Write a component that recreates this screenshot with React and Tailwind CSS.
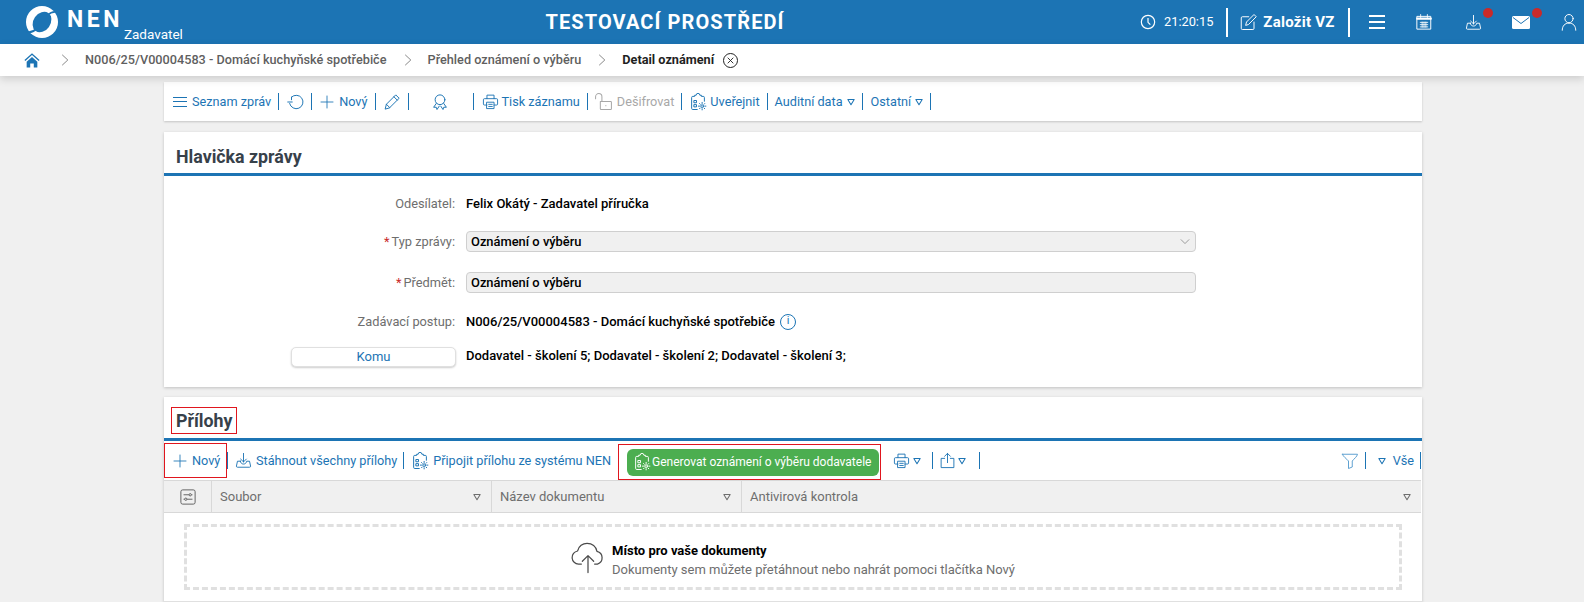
import React from 'react';

const blue = 'text-[#1c74b4]';

const Sep = ({ className = '' }) => <span className={`block w-px h-[17px] bg-[#1c74b4] shrink-0 ${className}`} />;

const Tri = ({ className = 'text-[#1c74b4]' }) => (
  <svg viewBox="0 0 10 10" className={`w-[8px] h-[8px] shrink-0 ${className}`} fill="none" stroke="currentColor" strokeWidth="1.300">
    <path d="M1 2h8L5 8.500z" strokeLinejoin="round" />
  </svg>
);

const Ico = ({ children, className = '' }) => (
  <svg viewBox="0 0 24 24" fill="none" stroke="currentColor" strokeWidth="1.300" strokeLinecap="round" strokeLinejoin="round" className={`shrink-0 ${className}`}>
    {children}
  </svg>
);

const PrintIcon = ({ className }) => (
  <Ico className={className}>
    <path d="M7 8V3h10v5M7 17H3.500a1.500 1.500 0 0 1-1.500-1.500v-6A1.500 1.500 0 0 1 3.500 8h17a1.500 1.500 0 0 1 1.500 1.500v6a1.500 1.500 0 0 1-1.500 1.500H17" />
    <path d="M7 13h10v9H7zM9.500 16h5M9.500 19h5" />
  </Ico>
);

const ClipGear = ({ className }) => (
  <Ico className={className}>
    <path d="M11 22H5a1.500 1.500 0 0 1-1.500-1.500V6A1.500 1.500 0 0 1 5 4.500h2.500V3h2a2.500 2.500 0 0 1 5 0h2v1.500H19A1.500 1.500 0 0 1 20.500 6v5" />
    <path d="M7 10h3v3H7zM7 15.500h3v3H7z" />
    <circle cx="17.500" cy="17.500" r="1.800" />
    <path d="M17.500 12.500v1.500M17.500 21v1.500M12.500 17.500H14M21 17.500h1.500M14 14l1 1M20 20l1 1M14 21l1-1M20 15l1-1" />
  </Ico>
);

const DownloadTray = ({ className }) => (
  <Ico className={className}>
    <path d="M12 2v12M8 10l4 4 4-4" />
    <path d="M7.500 13H3.500L2 20a1.500 1.500 0 0 0 1.500 1.500h17A1.500 1.500 0 0 0 22 20l-1.500-7h-4c-.5 2.500-2 4-4.500 4s-4-1.500-4.500-4z" />
  </Ico>
);

const Dot = ({ className }) => <span className={`absolute w-[10px] h-[10px] rounded-full bg-[#c92a2a] ${className}`} />;

const Logo = () => (
  <svg viewBox="0 0 32 32" className="w-[32px] h-[32px] shrink-0">
    <circle cx="16" cy="16" r="16" fill="#fff" />
    <ellipse cx="16" cy="16" rx="8.500" ry="11" transform="rotate(35 16 16)" fill="#1c74b4" />
    <path d="M21 9.500C25 6 28.500 5 32 6.500M11 22.500C7 26 3.500 27 0 25.500" fill="none" stroke="#1c74b4" strokeWidth="1.800" />
  </svg>
);

const Header = () => (
  <header className="h-[44px] bg-[#1c74b4] text-white flex items-center shrink-0">
    <div className="flex items-center pl-[26px] w-[190px] h-full shrink-0 whitespace-nowrap">
      <Logo />
      <span className="ml-[9px] font-bold text-[23px] leading-none tracking-[3.500px] -mt-[1px] mb-[4px]">NEN</span>
      <span className="text-[13.500px] self-end ml-[1px] leading-[20px]">Zadavatel</span>
    </div>
    <div className="flex-1 text-center font-bold text-[20px] tracking-[1.100px]">TESTOVACÍ PROSTŘEDÍ</div>
    <div className="flex items-center h-full w-[444px] shrink-0">
      <svg viewBox="0 0 24 24" className="w-[16px] h-[16px] shrink-0" fill="none" stroke="currentColor" strokeWidth="1.800"><circle cx="12" cy="12" r="10" /><path d="M12 6v6.500l3.500 3.500" /></svg>
      <span className="ml-[8px] text-[12.800px]">21:20:15</span>
      <span className="block ml-[13px] w-[2px] h-[29px] bg-white" />
      <Ico className="w-[18px] h-[18px] ml-[11px]">
        <path d="M20 12v8.500a1.500 1.500 0 0 1-1.500 1.500h-14A1.500 1.500 0 0 1 3 20.500v-14A1.500 1.500 0 0 1 4.500 5H13" />
        <path d="M9 16l1-4L20 2l3 3-10 10z" />
      </Ico>
      <span className="ml-[6px] text-[15px] font-bold tracking-[0.250px]">Založit VZ</span>
      <span className="block ml-[13px] w-[2px] h-[29px] bg-white" />
      <div className="ml-[19px] w-[16px] flex flex-col gap-[4px]">
        <span className="h-[2px] bg-white" /><span className="h-[2px] bg-white" /><span className="h-[2px] bg-white" />
      </div>
      <Ico className="w-[18px] h-[18px] ml-[30px]">
        <path d="M3 4.500h18v17H3z" /><path d="M3 7.500h18" strokeWidth="3" /><path d="M7.500 2v4M16.500 2v4M7 12.500h10M7 15.500h10M7 18.500h10M9.500 12v7M12 12v7M14.500 12v7" strokeWidth="1.100" />
      </Ico>
      <span className="relative ml-[32px] flex">
        <DownloadTray className="w-[17px] h-[17px]" />
        <Dot className="-top-[6px] -right-[11px]" />
      </span>
      <span className="relative ml-[30px] flex">
        <svg viewBox="0 0 18 13" className="w-[18px] h-[13px]"><rect width="18" height="13" rx="1.500" fill="#fff" /><path d="M1 1.500l8 6 8-6" fill="none" stroke="#1c74b4" strokeWidth="1" /></svg>
        <Dot className="-top-[8px] -right-[12px]" />
      </span>
      <Ico className="w-[18px] h-[18px] ml-[30px]">
        <circle cx="12" cy="7.500" r="5.500" /><path d="M3 23c0-6 3.500-9.500 9-9.500s9 3.500 9 9.500" />
      </Ico>
    </div>
  </header>
);

const Chevron = ({ className }) => (
  <svg viewBox="0 0 10 16" className={`w-[8px] h-[14px] shrink-0 text-[#6b6b6b] ${className}`} fill="none" stroke="currentColor" strokeWidth="1"><path d="M1.500 1.500L8.500 8l-7 6.500" /></svg>
);

const Breadcrumb = () => (
  <nav className="h-[32px] bg-white flex items-center pl-[24px] shadow-[0_3px_8px_rgba(0,0,0,0.15)] relative shrink-0 text-[12.700px] font-medium text-[#5f5f5f]">
    <svg viewBox="0 0 18 17" className="w-[16px] h-[16px] shrink-0" fill="#1c74b4"><path d="M9 1L0.500 8.500l1 1L9 3l7.500 6.500 1-1zM3 10.500V17h4v-4.500h4V17h4v-6.500L9 5z" /></svg>
    <Chevron className="ml-[21px]" />
    <span className="ml-[16px]">N006/25/V00004583 - Domácí kuchyňské spotřebiče</span>
    <Chevron className="ml-[17px]" />
    <span className="ml-[16px]">Přehled oznámení o výběru</span>
    <Chevron className="ml-[17px]" />
    <span className="ml-[16px] text-[#1f1f1f] font-bold">Detail oznámení</span>
    <span className="ml-[9px] w-[15px] h-[15px] rounded-full border border-[#222] flex items-center justify-center">
      <svg viewBox="0 0 10 10" className="w-[7px] h-[7px]" stroke="#222" strokeWidth="1.300"><path d="M1 1l8 8M9 1l-8 8" /></svg>
    </span>
  </nav>
);

const Toolbar = () => (
  <div className={`mt-[6px] h-[39px] bg-white shadow-[0_1px_2px_rgba(0,0,0,0.18)] flex items-center pl-[9px] text-[12.700px] ${blue}`}>
    <div className="w-[14px] flex flex-col gap-[3.500px] shrink-0">
      <span className="h-px bg-[#1c74b4]" /><span className="h-px bg-[#1c74b4]" /><span className="h-px bg-[#1c74b4]" />
    </div>
    <span className="ml-[5px]">Seznam zpráv</span>
    <Sep className="ml-[7px]" />
    <Ico className="w-[18px] h-[18px] ml-[8px]">
      <path d="M6 5.500A9 9 0 1 1 3.500 14" /><path d="M1 12h6M6 5.500V9" />
    </Ico>
    <Sep className="ml-[6px]" />
    <Ico className="w-[16px] h-[16px] ml-[7px]"><path d="M12 3v18M3 12h18" /></Ico>
    <span className="ml-[4px]">Nový</span>
    <Sep className="ml-[7px]" />
    <Ico className="w-[18px] h-[18px] ml-[7px]">
      <path d="M3 21l1.500-6L17 2.500 21.500 7 9 19.500zM4.500 15L9 19.500M14.500 5L19 9.500" />
    </Ico>
    <Sep className="ml-[7px]" />
    <Ico className="w-[18px] h-[18px] ml-[22px]">
      <circle cx="12" cy="9" r="6.500" /><path d="M7 14l-3.500 5 3.500 0 1 3 3-4.500M17 14l3.500 5-3.500 0-1 3-3-4.500" />
    </Ico>
    <Sep className="ml-[24px]" />
    <PrintIcon className="w-[17px] h-[17px] ml-[8px]" />
    <span className="ml-[3px]">Tisk záznamu</span>
    <Sep className="ml-[7px]" />
    <Ico className="w-[19px] h-[19px] ml-[6px] text-[#a8a8a8]">
      <path d="M2 8.500V6a4 4 0 0 1 8 0v6M8 12h13a1 1 0 0 1 1 1v8a1 1 0 0 1-1 1H9a1 1 0 0 1-1-1zM15 17v.5" />
    </Ico>
    <span className="ml-[4px] text-[#a8a8a8]">Dešifrovat</span>
    <Sep className="ml-[7px]" />
    <ClipGear className="w-[18px] h-[18px] ml-[7px]" />
    <span className="ml-[3px]">Uveřejnit</span>
    <Sep className="ml-[7px]" />
    <span className="ml-[7px]">Auditní data</span>
    <Tri className={`ml-[4px] ${blue}`} />
    <Sep className="ml-[7px]" />
    <span className="ml-[8px]">Ostatní</span>
    <Tri className={`ml-[4px] ${blue}`} />
    <Sep className="ml-[7px]" />
  </div>
);

const Label = ({ req, children }) => (
  <div className="w-[302px] pr-[11px] text-right text-[12.800px] font-normal text-[#6e6e6e] shrink-0">
    {req && <span className="text-[#c92a2a] mr-[2px]">*</span>}
    {children}
  </div>
);

const FieldBox = ({ children }) => (
  <div className="w-[730px] h-[21px] bg-[#f0f0f0] border border-[#cfcfcf] rounded-[4px] flex items-center justify-between pl-[4px] pr-[5px] text-[12.900px] font-medium text-black">
    {children}
  </div>
);

const HeaderCard = () => (
  <section className="mt-[11px] h-[255px] bg-white shadow-[0_1px_3px_rgba(0,0,0,0.2)]">
    <h2 className="h-[44px] pl-[12px] pt-[14px] text-[17.800px] leading-[22px] font-bold text-[#37414a] border-b-[3px] border-[#1c74b4]">Hlavička zprávy</h2>
    <div className="text-[13px] font-medium text-black">
      <div className="flex items-center h-[21px] mt-[17px]">
        <Label>Odesílatel:</Label>
        <span>Felix Okátý - Zadavatel příručka</span>
      </div>
      <div className="flex items-center mt-[17px]">
        <Label req>Typ zprávy:</Label>
        <FieldBox>
          Oznámení o výběru
          <svg viewBox="0 0 12 8" className="w-[10px] h-[7px]" fill="none" stroke="#8a8a8a"><path d="M1 1.500l5 5 5-5" /></svg>
        </FieldBox>
      </div>
      <div className="flex items-center mt-[20px]">
        <Label req>Předmět:</Label>
        <FieldBox>Oznámení o výběru</FieldBox>
      </div>
      <div className="flex items-center h-[21px] mt-[18px]">
        <Label>Zadávací postup:</Label>
        <span>N006/25/V00004583 - Domácí kuchyňské spotřebiče</span>
        <span className={`ml-[5px] w-[16px] h-[16px] rounded-full border border-[#1c74b4] flex items-center justify-center text-[11px] font-normal ${blue}`}>i</span>
      </div>
      <div className="flex items-center mt-[15px]">
        <div className="w-[302px] shrink-0 pl-[127px]">
          <div className={`h-[20px] w-[165px] bg-white border border-[#e0e0e0] rounded-[5px] shadow-[0_1px_2px_rgba(0,0,0,0.2)] flex items-center justify-center text-[13px] font-normal ${blue}`}>Komu</div>
        </div>
        <span className="-mt-[2px]">Dodavatel - školení 5; Dodavatel - školení 2; Dodavatel - školení 3;</span>
      </div>
    </div>
  </section>
);

const Th = ({ className = 'flex-1', children }) => (
  <div className={`${className} h-full flex items-center justify-between pl-[8px] pr-[10px] text-[13px] text-[#6e6e6e]`}>
    <span>{children}</span>
    <Tri className="text-[#6e6e6e]" />
  </div>
);

const Attachments = () => (
  <section className="mt-[10px] h-[205px] bg-white shadow-[0_1px_3px_rgba(0,0,0,0.2)] border-b border-[#e0e0e0]">
    <div className="h-[44px] pl-[7px] pt-[10px] border-b-[3px] border-[#1c74b4]">
      <h2 className="inline-block border border-[#e0161e] px-[4px] h-[27px] leading-[26px] text-[17.800px] font-bold text-[#37414a]">Přílohy</h2>
    </div>
    <div className={`h-[39px] flex items-center text-[12.700px] ${blue}`}>
      <div className="w-[63px] h-[35px] border border-[#e0161e] flex items-center pl-[7px] shrink-0">
        <Ico className="w-[16px] h-[16px]"><path d="M12 3v18M3 12h18" /></Ico>
        <span className="ml-[4px]">Nový</span>
      </div>
      <Sep />
      <DownloadTray className="w-[17px] h-[17px] ml-[7px]" />
      <span className="ml-[4px]">Stáhnout všechny přílohy</span>
      <Sep className="ml-[6px]" />
      <ClipGear className="w-[18px] h-[18px] ml-[7px]" />
      <span className="ml-[4px]">Připojit přílohu ze systému NEN</span>
      <div className="ml-[7px] w-[263px] h-[36px] mt-[3px] border border-[#e0161e] flex items-center pl-[8px] shrink-0">
        <div className="w-[252px] h-[27px] bg-[#4cae50] rounded-[6px] flex items-center pl-[6px] text-white text-[12px]">
          <ClipGear className="w-[18px] h-[18px]" />
          <span className="ml-[1px] whitespace-nowrap">Generovat oznámení o výběru dodavatele</span>
        </div>
      </div>
      <PrintIcon className="w-[17px] h-[17px] ml-[12px]" />
      <Tri className={`ml-[3px] ${blue}`} />
      <Sep className="ml-[11px]" />
      <Ico className="w-[17px] h-[17px] ml-[6px]">
        <path d="M12 15V2M8 6l4-4 4 4M8 9H3v13h18V9h-5" />
      </Ico>
      <Tri className={`ml-[2px] ${blue}`} />
      <Sep className="ml-[13px]" />
      <div className="flex-1" />
      <Ico className="w-[18px] h-[18px] text-[#5c9fd0]"><path d="M2 3h20c-.5 3-4.500 6-7 9v8l-5 2V12C7.500 9 2.500 6 2 3z" /></Ico>
      <Sep className="ml-[6px]" />
      <Tri className={`ml-[12px] ${blue}`} />
      <span className="ml-[7px]">Vše</span>
      <Sep className="ml-[6px] mr-px" />
    </div>
    <div className="h-[33px] bg-[#f0f0f0] border-y border-[#d8d8d8] flex items-center mr-px">
      <div className="w-[48px] h-full border-r border-[#d8d8d8] flex items-center justify-center text-[#555]">
        <svg viewBox="0 0 18 18" className="w-[16px] h-[16px]" fill="none" stroke="currentColor"><rect x="1" y="1" width="16" height="16" rx="2" /><path d="M4 6.500h6M13 6.500h1M4 11.500h1M8 11.500h6" /><circle cx="11.500" cy="6.500" r="1.300" /><circle cx="6.500" cy="11.500" r="1.300" /></svg>
      </div>
      <Th className="w-[280px] border-r border-[#d8d8d8]">Soubor</Th>
      <Th className="w-[250px] border-r border-[#d8d8d8]">Název dokumentu</Th>
      <Th>Antivirová kontrola</Th>
    </div>
    <div className="mx-[20px] mt-[11px] h-[66px] border-[3px] border-dashed border-[#e0e0e0] flex items-center justify-center">
      <svg viewBox="0 0 36 34" className="w-[34px] h-[33px] shrink-0 text-[#4a4a4a]" fill="none" stroke="currentColor" strokeWidth="1.300" strokeLinecap="round" strokeLinejoin="round">
        <path d="M11 24H8a7 7 0 0 1-1-13.900C8 5 12.500 2 17 2c5.500 0 9.500 3.500 10.500 8.500A7 7 0 0 1 28 24h-3" />
        <path d="M18 33V15M12 21l6-6 6 6" />
      </svg>
      <div className="ml-[7px] pt-[6px] text-[13px]">
        <div className="font-bold text-black leading-[19px]">Místo pro vaše dokumenty</div>
        <div className="text-[#6e6e6e] leading-[19px]">Dokumenty sem můžete přetáhnout nebo nahrát pomoci tlačítka Nový</div>
      </div>
    </div>
  </section>
);

const App = () => (
  <div className="w-[1584px] h-[602px] overflow-hidden bg-[#f0f0f0] flex flex-col font-['Roboto',sans-serif]">
    <Header />
    <Breadcrumb />
    <main className="w-[1258px] ml-[164px]">
      <Toolbar />
      <HeaderCard />
      <Attachments />
    </main>
  </div>
);

export default App;
